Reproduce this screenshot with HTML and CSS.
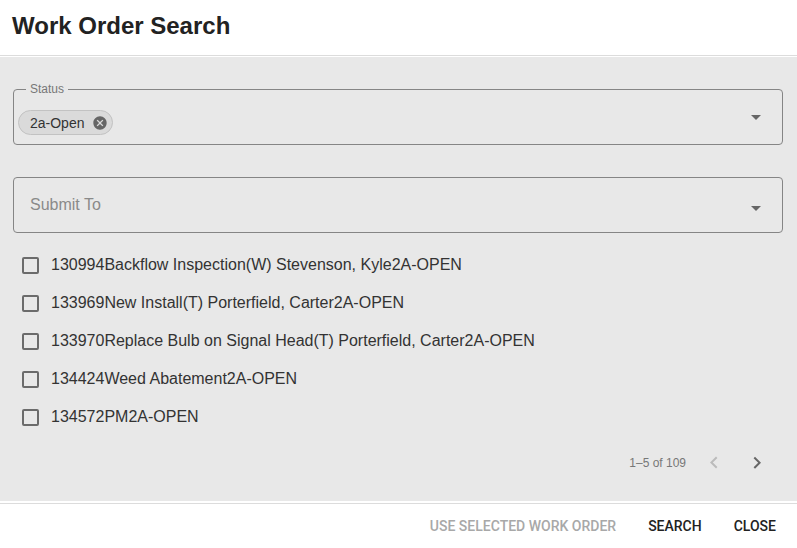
FILE: index.html
```html
<!DOCTYPE html>
<html>
<head>
<meta charset="utf-8">
<link rel="stylesheet" href="styles.css">
</head>
<body>
<div class="dialog">
  <header class="title">Work Order Search</header>
  <main class="content">
    <div class="field status">
      <span class="label">Status</span>
      <span class="chip">2a-Open
        <svg class="chip-x" viewBox="0 0 24 24" width="16" height="16"><path d="M12 2C6.47 2 2 6.47 2 12s4.47 10 10 10 10-4.47 10-10S17.530 2 12 2zm5 13.59L15.59 17 12 13.41 8.41 17 7 15.59 10.59 12 7 8.41 8.41 7 12 10.59 15.590 7 17 8.41 13.41 12 17 15.59z"/></svg>
      </span>
      <svg class="caret" viewBox="0 0 24 24" width="24" height="24"><path d="M7 10l5 5 5-5z"/></svg>
    </div>
    <div class="field submit">
      <span class="placeholder">Submit To</span>
      <svg class="caret" viewBox="0 0 24 24" width="24" height="24"><path d="M7 10l5 5 5-5z"/></svg>
    </div>
    <ul class="list">
      <li class="row"><span class="box"></span><span>130994Backflow Inspection(W) Stevenson, Kyle2A-OPEN</span></li>
      <li class="row"><span class="box"></span><span>133969New Install(T) Porterfield, Carter2A-OPEN</span></li>
      <li class="row"><span class="box"></span><span>133970Replace Bulb on Signal Head(T) Porterfield, Carter2A-OPEN</span></li>
      <li class="row"><span class="box"></span><span>134424Weed Abatement2A-OPEN</span></li>
      <li class="row"><span class="box"></span><span>134572PM2A-OPEN</span></li>
    </ul>
    <div class="pager">
      <span class="count">1–5 of 109</span>
      <span class="nav disabled"><svg viewBox="0 0 24 24" width="24" height="24"><path d="M15.41 16.090l-4.58-4.59 4.58-4.59L14 5.5l-6 6 6 6z"/></svg></span>
      <span class="nav"><svg viewBox="0 0 24 24" width="24" height="24"><path d="M8.59 16.34l4.58-4.59-4.58-4.59L10 5.75l6 6-6 6z"/></svg></span>
    </div>
  </main>
  <footer class="actions">
    <span class="btn disabled">USE SELECTED WORK ORDER</span>
    <span class="btn">SEARCH</span>
    <span class="btn">CLOSE</span>
  </footer>
</div>
</body>
</html>
```

FILE: styles.css
```css
* { box-sizing: border-box; }
html, body { margin: 0; padding: 0; background: #fff; }
body {
  font-family: "Liberation Sans", Arial, sans-serif;
  color: #333;
  width: 797px;
  height: 548px;
  overflow: hidden;
}
.dialog { display: flex; flex-direction: column; }
.title {
  height: 56px;
  padding: 12px 0 0 12px;
  font-size: 24px;
  line-height: 28px;
  font-weight: bold;
  color: #222;
  border-bottom: 1px solid #dcdcdc;
}
.content {
  margin-top: 1px;
  height: 444px;
  background: #e8e8e8;
  padding: 32px 14px 0 13px;
  display: flex;
  flex-direction: column;
}
.field {
  position: relative;
  height: 56px;
  border: 1px solid #858585;
  border-radius: 4px;
  display: flex;
  align-items: flex-start;
}
.status { padding: 20px 0 0 4px; }
.label {
  position: absolute;
  left: 12px;
  top: -8px;
  padding: 0 4px;
  background: #e8e8e8;
  font-size: 12px;
  line-height: 14px;
  color: #777;
}
.chip {
  display: inline-flex;
  align-items: center;
  height: 25px;
  padding: 0 4px 0 11px;
  background: #dadada;
  border: 1px solid #c2c2c2;
  border-radius: 13px;
  font-size: 14px;
  color: #333;
}
.chip-x { margin-left: 8px; fill: #666; }
.caret {
  position: absolute;
  right: 14px;
  top: 15px;
  fill: #666;
}
.submit { margin-top: 32px; padding: 17px 0 0 16px; }
.submit .caret { top: 18px; }
.placeholder { font-size: 16px; line-height: 20px; color: #8a8a8a; }
.list { list-style: none; margin: 13px 0 0; padding: 0; }
.row {
  height: 38px;
  display: flex;
  align-items: center;
  font-size: 16px;
  color: #333;
  padding-left: 9px;
}
.box {
  width: 17px;
  height: 17px;
  border: 2px solid #6b6b6b;
  border-radius: 2px;
  margin-right: 12px;
  flex: none;
}
.pager {
  height: 54px;
  display: flex;
  align-items: center;
  justify-content: flex-end;
  padding-right: 11px;
  font-size: 12px;
  color: #777;
}
.count { margin-right: 13px; }
.nav {
  width: 30px;
  height: 30px;
  display: flex;
  align-items: center;
  justify-content: center;
  fill: #666;
}
.nav + .nav { margin-left: 13px; }
.nav.disabled { fill: #bbb; }
.actions {
  margin-top: 2px;
  border-top: 1px solid #dcdcdc;
  height: 45px;
  display: flex;
  align-items: center;
  justify-content: flex-end;
  padding-right: 13px;
  gap: 16px;
}
.btn {
  font-family: Roboto, "Liberation Sans", sans-serif;
  font-weight: 500;
  font-size: 14px;
  letter-spacing: 0;
  color: #222;
  padding: 6px 8px;
}
.btn.disabled { color: #a8a8a8; }
```
